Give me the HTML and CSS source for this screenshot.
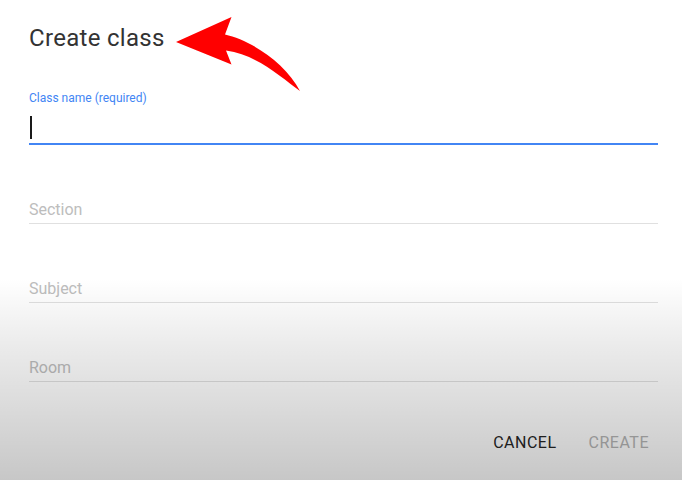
FILE: index.html
```html
<!DOCTYPE html>
<html lang="en">
<head>
<meta charset="utf-8">
<title>Create class</title>
<link rel="stylesheet" href="styles.css">
</head>
<body>
<div class="dialog">
  <h1 class="title">Create class</h1>

  <div class="field field-active">
    <label class="field-label">Class name (required)</label>
    <div class="field-input"><span class="caret"></span></div>
  </div>

  <div class="field">
    <div class="placeholder">Section</div>
  </div>

  <div class="field">
    <div class="placeholder">Subject</div>
  </div>

  <div class="field">
    <div class="placeholder">Room</div>
  </div>

  <div class="actions">
    <span class="btn btn-cancel">CANCEL</span>
    <span class="btn btn-create">CREATE</span>
  </div>
</div>

<svg class="arrow" width="140" height="90" viewBox="170 10 140 90" xmlns="http://www.w3.org/2000/svg">
  <path d="M176,42 L231.5,17 L225,34.5 C250,40 285,62 300,91 C282,78 258,55 226,50.5 L231.5,64.5 Z" fill="#ff0000"/>
</svg>

<div class="shade"></div>
</body>
</html>
```

FILE: styles.css
```css
html, body {
  margin: 0;
  padding: 0;
  width: 682px;
  height: 480px;
  overflow: hidden;
  background: #ffffff;
  font-family: Roboto, "Noto Sans", Arial, sans-serif;
}

body {
  position: relative;
}

.dialog {
  display: flex;
  flex-direction: column;
  padding: 24px 24px 0 29px;
}

.title {
  margin: 0;
  font-size: 24px;
  line-height: 28px;
  font-weight: 400;
  color: #333333;
  letter-spacing: 0.3px;
}

.field {
  display: flex;
  flex-direction: column;
  margin-top: 55px;
  border-bottom: 1px solid #e0e0e0;
}

.field-active {
  margin-top: 38px;
  border-bottom: 2px solid #4285f4;
}

.field-label {
  font-size: 12px;
  line-height: 16px;
  color: #4285f4;
}

.field-input {
  height: 37px;
  display: flex;
  align-items: flex-end;
  padding-bottom: 4px;
  box-sizing: border-box;
}

.caret {
  width: 2px;
  height: 23px;
  margin-left: 0.5px;
  background: #1a1a1a;
}

.placeholder {
  font-size: 16px;
  line-height: 20px;
  color: #bdbdbd;
  padding-bottom: 3px;
}

.actions {
  display: flex;
  justify-content: flex-end;
  gap: 14px;
  margin-top: 51px;
}

.btn {
  padding: 0 9px;
  font-size: 16px;
  line-height: 20px;
  letter-spacing: 0.5px;
  font-weight: 400;
}

.btn-cancel {
  color: #262626;
}

.btn-create {
  color: #b5b5b5;
}

.arrow {
  position: absolute;
  left: 170px;
  top: 10px;
}

.shade {
  position: absolute;
  left: 0;
  top: 0;
  width: 682px;
  height: 480px;
  pointer-events: none;
  background: linear-gradient(to bottom,
    rgba(0,0,0,0) 0%,
    rgba(0,0,0,0) 58%,
    rgba(0,0,0,0.08) 72%,
    rgba(0,0,0,0.15) 86%,
    rgba(0,0,0,0.22) 100%);
}
```
